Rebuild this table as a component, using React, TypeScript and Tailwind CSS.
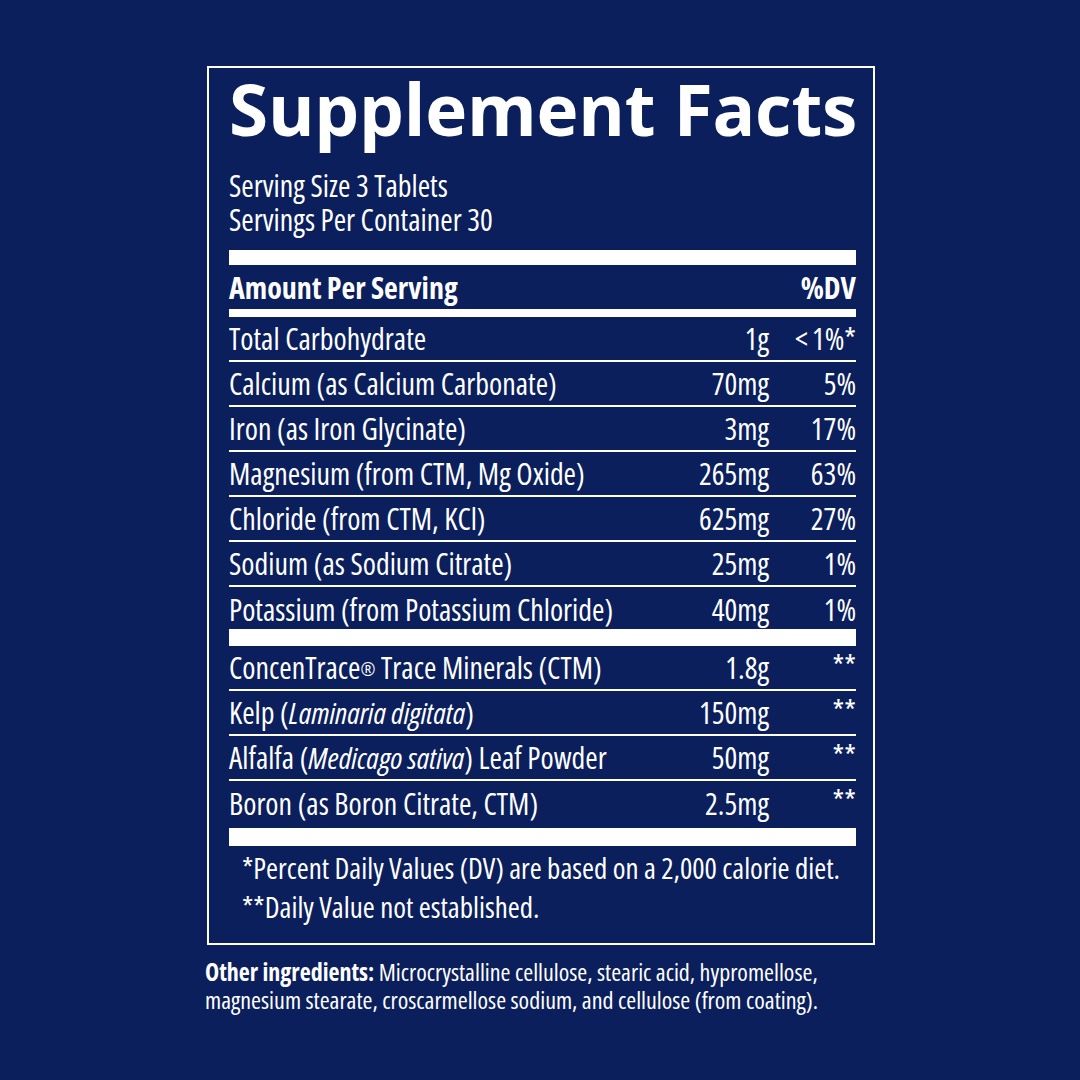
type Row = { name: React.ReactNode; amount: string; dv: React.ReactNode; star?: boolean };

const rowsA: Row[] = [
  {
    name: "Total Carbohydrate",
    amount: "1g",
    dv: (
      <>
        <span className="mr-[4px]">&lt;</span>1%*
      </>
    ),
  },
  { name: "Calcium (as Calcium Carbonate)", amount: "70mg", dv: "5%" },
  { name: "Iron (as Iron Glycinate)", amount: "3mg", dv: "17%" },
  { name: "Magnesium (from CTM, Mg Oxide)", amount: "265mg", dv: "63%" },
  { name: "Chloride (from CTM, KCl)", amount: "625mg", dv: "27%" },
  { name: "Sodium (as Sodium Citrate)", amount: "25mg", dv: "1%" },
  { name: "Potassium (from Potassium Chloride)", amount: "40mg", dv: "1%" },
];

const rowsB: Row[] = [
  {
    name: (
      <>
        ConcenTrace<sup className="text-[18px] relative top-[-3px]">®</sup> Trace Minerals (CTM)
      </>
    ),
    amount: "1.8g",
    dv: "**",
    star: true,
  },
  {
    name: (
      <>
        Kelp (<i>Laminaria digitata</i>)
      </>
    ),
    amount: "150mg",
    dv: "**",
    star: true,
  },
  {
    name: (
      <>
        Alfalfa (<i>Medicago sativa</i>) Leaf Powder
      </>
    ),
    amount: "50mg",
    dv: "**",
    star: true,
  },
  { name: "Boron (as Boron Citrate, CTM)", amount: "2.5mg", dv: "**", star: true },
];

function NutrientRow({ row, last }: { row: Row; last: boolean }) {
  return (
    <div
      className={
        "flex items-center h-[45px] " + (last ? "" : "border-b-2 border-white")
      }
    >
      <div className="flex-1 whitespace-nowrap">{row.name}</div>
      <div className="w-[120px] text-right whitespace-nowrap">{row.amount}</div>
      <div
        className={
          "w-[87px] text-right whitespace-nowrap " +
          (row.star ? "self-start pt-[5px] text-[30px] leading-[30px]" : "")
        }
      >
        {row.dv}
      </div>
    </div>
  );
}

export default function App() {
  return (
    <div className="w-[1080px] h-[1080px] bg-[#0b1f5c] text-white font-['Open_Sans',sans-serif] pt-[66px] pl-[205px]">
      <div className="ml-[2px] w-[668px] border-2 border-white pl-[20px] pr-[17px] pt-[5px]">
        <h1 className="text-[71px] font-bold leading-[71px] tracking-[-0.2px] whitespace-nowrap">
          Supplement Facts
        </h1>
        <div className="mt-[25px] text-[30px] leading-[34px] font-stretch-[82%]">
          <div>Serving Size 3 Tablets</div>
          <div>Servings Per Container 30</div>
        </div>
        <div className="mt-[13px] h-[15px] bg-white" />
        <div className="flex items-center h-[44px] text-[30px] font-bold font-stretch-[80%]">
          <div className="flex-1">Amount Per Serving</div>
          <div>%DV</div>
        </div>
        <div className="h-[8px] bg-white" />
        <div className="text-[30px] font-stretch-[80%]">
          {rowsA.map((r, i) => (
            <NutrientRow key={i} row={r} last={i === rowsA.length - 1} />
          ))}
        </div>
        <div className="mt-[-3px] h-[17px] bg-white" />
        <div className="text-[30px] font-stretch-[80%] pb-[2px]">
          {rowsB.map((r, i) => (
            <NutrientRow key={i} row={r} last={i === rowsB.length - 1} />
          ))}
        </div>
        <div className="h-[18px] bg-white" />
        <div className="pl-[13px] pt-[2px] pb-[17px] text-[29px] leading-[39px] font-stretch-[85%]">
          <div>*Percent Daily Values (DV) are based on a 2,000 calorie diet.</div>
          <div>**Daily Value not established.</div>
        </div>
      </div>
      <div className="mt-[13px] text-[24px] leading-[28px] font-medium font-stretch-[80%] whitespace-nowrap">
        <div>
          <span className="font-bold">Other ingredients:</span> Microcrystalline cellulose, stearic acid,
          hypromellose,
        </div>
        <div>magnesium stearate, croscarmellose sodium, and cellulose (from coating).</div>
      </div>
    </div>
  );
}
